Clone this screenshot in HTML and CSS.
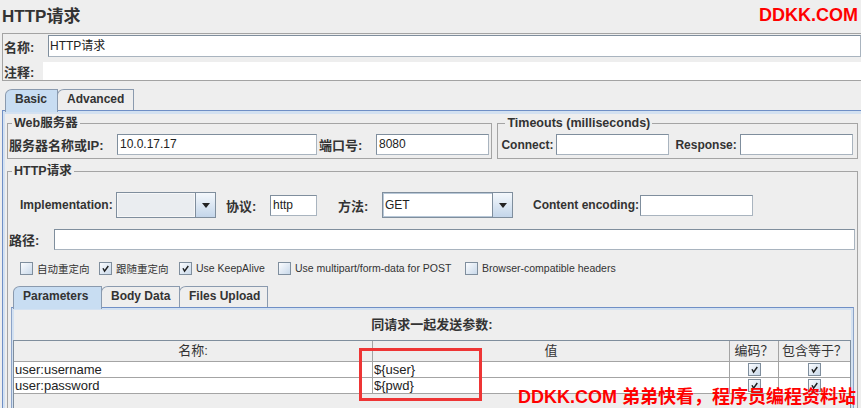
FILE: index.html
```html
<!DOCTYPE html>
<html lang="zh-CN">
<head>
<meta charset="utf-8">
<title>HTTP请求</title>
<link rel="stylesheet" href="styles.css">
</head>
<body>
<header class="header">
  <h1 class="title">HTTP请求</h1>
  <div class="brand">DDKK.COM</div>
</header>

<section class="namebox">
  <div class="name-row">
    <label class="lbl zh name-lbl">名称:</label>
    <div class="field name-field">HTTP请求</div>
  </div>
  <div class="comment-row">
    <label class="lbl zh comment-lbl">注释:</label>
    <div class="comment-field"></div>
  </div>
</section>

<nav class="tabs outer-tabs">
  <div class="tab selected tab-basic">Basic</div>
  <div class="tab tab-advanced">Advanced</div>
</nav>

<main class="outer-content">
  <div class="top-panels">
    <fieldset class="group web-group">
      <legend>Web服务器</legend>
      <div class="frow">
        <label class="lbl zh server-lbl">服务器名称或IP:</label>
        <div class="field server-field">10.0.17.17</div>
        <label class="lbl zh port-lbl">端口号:</label>
        <div class="field port-field">8080</div>
      </div>
    </fieldset>
    <fieldset class="group timeout-group">
      <legend>Timeouts (milliseconds)</legend>
      <div class="frow">
        <label class="lbl connect-lbl">Connect:</label>
        <div class="field t-field"></div>
        <label class="lbl response-lbl">Response:</label>
        <div class="field t-field"></div>
      </div>
    </fieldset>
  </div>

  <fieldset class="group http-group">
    <legend>HTTP请求</legend>
    <div class="impl-row">
      <label class="lbl impl-lbl">Implementation:</label>
      <div class="combo impl-combo"><div class="combo-value"></div><div class="combo-btn"><span class="tri"></span></div></div>
      <label class="lbl zh proto-lbl">协议:</label>
      <div class="field proto-field">http</div>
      <label class="lbl zh method-lbl">方法:</label>
      <div class="combo method-combo"><div class="combo-value">GET</div><div class="combo-btn"><span class="tri"></span></div></div>
      <label class="lbl enc-lbl">Content encoding:</label>
      <div class="field enc-field"></div>
    </div>
    <div class="path-row">
      <label class="lbl zh path-lbl">路径:</label>
      <div class="field path-field"></div>
    </div>
    <div class="cb-row">
      <div class="cb-item cb-w1"><span class="cb"></span><span class="cb-text">自动重定向</span></div>
      <div class="cb-item cb-w2"><span class="cb"><svg viewBox="0 0 13 13"><path d="M3.5 6.2 L5.4 9.6 L9.8 3.6"/></svg></span><span class="cb-text">跟随重定向</span></div>
      <div class="cb-item cb-w3"><span class="cb"><svg viewBox="0 0 13 13"><path d="M3.5 6.2 L5.4 9.6 L9.8 3.6"/></svg></span><span class="cb-text">Use KeepAlive</span></div>
      <div class="cb-item cb-w4"><span class="cb"></span><span class="cb-text">Use multipart/form-data for POST</span></div>
      <div class="cb-item"><span class="cb"></span><span class="cb-text">Browser-compatible headers</span></div>
    </div>

    <div class="inner-pane">
      <nav class="tabs inner-tabs">
        <div class="tab selected tab-params">Parameters</div>
        <div class="tab tab-body">Body Data</div>
        <div class="tab tab-files">Files Upload</div>
      </nav>
      <div class="inner-content">
        <div class="caption">同请求一起发送参数:</div>
        <div class="scroll">
          <div class="ptable">
            <div class="th">名称:</div>
            <div class="th">值</div>
            <div class="th">编码？</div>
            <div class="th last">包含等于？</div>

            <div class="td">user:username</div>
            <div class="td">${user}</div>
            <div class="td tc"><span class="cb"><svg viewBox="0 0 13 13"><path d="M3.5 6.2 L5.4 9.6 L9.8 3.6"/></svg></span></div>
            <div class="td tc last"><span class="cb"><svg viewBox="0 0 13 13"><path d="M3.5 6.2 L5.4 9.6 L9.8 3.6"/></svg></span></div>

            <div class="td">user:password</div>
            <div class="td">${pwd}</div>
            <div class="td tc"><span class="cb"><svg viewBox="0 0 13 13"><path d="M3.5 6.2 L5.4 9.6 L9.8 3.6"/></svg></span></div>
            <div class="td tc last"><span class="cb"><svg viewBox="0 0 13 13"><path d="M3.5 6.2 L5.4 9.6 L9.8 3.6"/></svg></span></div>
          </div>
        </div>
      </div>
    </div>
  </fieldset>
</main>

<div class="highlight"></div>
<div class="watermark">DDKK.COM 弟弟快看，程序员编程资料站</div>
</body>
</html>
```

FILE: styles.css
```css
* { box-sizing: border-box; }

html, body { margin: 0; padding: 0; }

body {
  width: 861px;
  height: 408px;
  overflow: hidden;
  position: relative;
  background: #eeeeee;
  color: #333333;
  font-family: "Liberation Sans", "Noto Sans CJK SC", sans-serif;
  font-size: 12px;
}

/* ---------- header ---------- */
.header {
  display: flex;
  justify-content: space-between;
  height: 33px;
  padding: 0 3px 0 2px;
}
.title {
  margin: 0;
  font-size: 17px;
  font-weight: bold;
  line-height: 33px;
  color: #333;
}
.brand {
  font-size: 18px;
  font-weight: bold;
  line-height: 31px;
  color: #ff0000;
}

/* ---------- common ---------- */
.lbl {
  display: block;
  flex: none;
  font-weight: bold;
  font-size: 12px;
  white-space: nowrap;
  color: #333;
}
.lbl.zh { font-size: 13px; }

.field {
  flex: none;
  height: 21px;
  background: #fff;
  border: 1px solid;
  border-color: #7f8e9d #a9b4bf #a9b4bf #7f8e9d;
  padding: 0 2px;
  font-size: 12px;
  line-height: 19px;
  color: #222;
  white-space: nowrap;
  overflow: hidden;
}

/* ---------- name / comment ---------- */
.namebox {
  margin-left: 2px;
  height: 48px;
  padding-top: 1px;
  border: 1px solid #a3a3a3;
  border-right: 0;
}
.name-row {
  display: flex;
  align-items: center;
  height: 22px;
}
.name-lbl { width: 45px; padding-left: 1px; }
.name-field { flex: 1; height: 22px; line-height: 20px; padding-left: 1px; }
.comment-row {
  display: flex;
  align-items: center;
  height: 18px;
  margin-top: 5px;
}
.comment-lbl { width: 40px; padding-left: 1px; }
.comment-field { flex: 1; height: 18px; background: #fff; }

/* ---------- tabs ---------- */
.tabs {
  display: flex;
  height: 21px;
}
.tab {
  height: 21px;
  border: 1px solid #8a9aae;
  border-bottom: 0;
  border-top-left-radius: 7px 6px;
  padding-left: 9px;
  font-size: 12px;
  font-weight: bold;
  line-height: 19px;
  color: #333;
  background: #eeeeee;
  white-space: nowrap;
}
.tab + .tab { margin-left: -1px; }
.tab.selected {
  position: relative;
  z-index: 1;
  height: 23px;
  background: #c8ddf2;
}
.outer-tabs { margin-top: 8px; padding-left: 5px; }
.tab-basic { width: 53px; }
.tab-advanced { width: 77px; }

.outer-content {
  margin-left: 2px;
  height: 300px;
  border-top: 1px solid #6f8fc6;
  border-left: 1px solid #6f8fc6;
  box-shadow: inset 2px 3px 0 #d3e1f1;
  padding: 4px 3px 0 4px;
}

/* ---------- titled groups ---------- */
.group {
  margin: 0;
  min-inline-size: 0;
  border: 1px solid #a4a4a4;
  padding: 0;
}
.group legend {
  margin-left: 3px;
  padding: 0 2px;
  font-size: 12.5px;
  font-weight: bold;
  line-height: 14px;
  color: #333;
}

.top-panels { display: flex; margin-top: 1px; }
.web-group { width: 486px; padding: 0 3px 3px 1px; }
.timeout-group { width: 361px; margin-left: 5px; padding: 0 3px 3px 3px; }
.timeout-group legend { margin-left: 4px; }

.frow {
  display: flex;
  align-items: center;
  height: 21px;
  margin-top: 4px;
}
.server-lbl { width: 108px; }
.server-field { width: 200px; }
.port-lbl { width: 59px; padding-left: 2px; }
.port-field { width: 113px; }
.connect-lbl { width: 55px; }
.t-field { width: 113px; }
.response-lbl { width: 71px; padding-left: 6px; }

/* ---------- HTTP group ---------- */
.http-group {
  width: 851px;
  height: 260px;
  margin-top: 5px;
  padding: 0 2px 0 1px;
}
.impl-row {
  display: flex;
  align-items: center;
  height: 26px;
  margin-top: 14px;
}
.impl-lbl { width: 107px; padding-left: 11px; }
.proto-lbl { width: 54px; padding-left: 10px; }
.proto-field { width: 47px; }
.method-lbl { width: 65px; padding-left: 21px; }
.enc-lbl { width: 127px; padding-left: 20px; }
.enc-field { width: 113px; }

.combo {
  display: flex;
  flex: none;
  height: 26px;
  border: 1px solid #7f8e9d;
}
.impl-combo { width: 100px; }
.method-combo { width: 131px; }
.combo-value {
  flex: 1;
  font-size: 12px;
  line-height: 22px;
  padding-left: 1px;
  color: #222;
  border: 1px solid #fafafa;
}
.impl-combo .combo-value { background: #eaedf0; border-color: #f6f7f8; }
.method-combo .combo-value { background: #fff; border-color: #b8c8d8; border-width: 1px 0 1px 1px; }
.combo-btn {
  width: 20px;
  flex: none;
  border-left: 1px solid #7f8e9d;
  background: linear-gradient(#f4f8fc, #c4d6ea);
  display: flex;
  align-items: center;
  justify-content: center;
}
.tri {
  width: 0;
  height: 0;
  border-left: 4px solid transparent;
  border-right: 4px solid transparent;
  border-top: 5px solid #222;
}

.path-row {
  display: flex;
  align-items: center;
  height: 21px;
  margin-top: 11px;
}
.path-lbl { width: 45px; }
.path-field { flex: 1; }

.cb-row {
  display: flex;
  align-items: center;
  height: 16px;
  margin-top: 10px;
  padding-left: 11px;
}
.cb-item {
  display: flex;
  align-items: center;
  flex: none;
}
.cb-w1 { width: 79px; }
.cb-w2 { width: 80px; }
.cb-w3 { width: 99px; }
.cb-w4 { width: 187px; }
.cb-text {
  margin-left: 4px;
  font-size: 10.5px;
  color: #333;
  white-space: nowrap;
}
.cb {
  display: inline-block;
  flex: none;
  width: 13px;
  height: 13px;
  border: 1px solid #7f8e9d;
  background: linear-gradient(135deg, #fbfcfe, #c9d9ea);
}
.cb svg {
  display: block;
  width: 11px;
  height: 11px;
}
.cb svg path {
  fill: none;
  stroke: #1e1e1e;
  stroke-width: 1.7;
}

/* ---------- inner tabs ---------- */
.inner-pane {
  margin-top: 10px;
  margin-left: 2px;
  width: 843px;
}
.inner-tabs { padding-left: 2px; }
.tab-params { width: 89px; }
.tab-body { width: 79px; }
.tab-files { width: 89px; }

.inner-content {
  height: 110px;
  border: 1px solid #8ca3c8;
  border-bottom: 0;
  border-top-color: #6f8fc6;
  box-shadow: inset 2px 2px 0 #d3e1f1, inset -2px 0 0 #d3e1f1;
  padding: 0 2px 0 1px;
}
.caption {
  margin-top: 9px;
  height: 16px;
  line-height: 16px;
  text-align: center;
  font-size: 13px;
  font-weight: bold;
  color: #333;
}

.scroll {
  margin-top: 7px;
  height: 80px;
  border: 1px solid #7f8e9d;
  border-bottom: 0;
  background: #eeeeee;
}
.ptable {
  display: grid;
  grid-template-columns: 359px 357px 49px 71px;
}
.th {
  height: 21px;
  border-right: 1px solid #a4a4a4;
  border-bottom: 1px solid #a4a4a4;
  background: #eeeeee;
  text-align: center;
  font-size: 13px;
  line-height: 20px;
  color: #333;
}
.td {
  height: 16px;
  background: #fff;
  border-right: 1px solid #a4a4a4;
  border-bottom: 1px solid #a4a4a4;
  font-size: 13px;
  line-height: 15px;
  padding-left: 1px;
  color: #222;
  white-space: nowrap;
}
.th.last, .td.last { border-right: 0; }
.td.tc {
  display: flex;
  justify-content: center;
  align-items: center;
  padding-left: 0;
}

/* ---------- overlays ---------- */
.highlight {
  position: absolute;
  left: 359px;
  top: 348px;
  width: 123px;
  height: 53px;
  border: 3px solid #ee3535;
}
.watermark {
  position: absolute;
  left: 518px;
  top: 387px;
  font-size: 18px;
  font-weight: bold;
  line-height: 20px;
  color: #ff0000;
  white-space: nowrap;
}
```
